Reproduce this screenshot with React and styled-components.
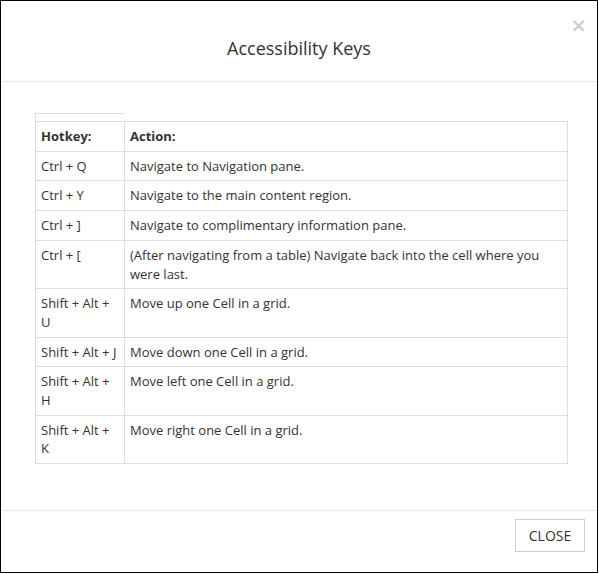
import React from "react";
import styled, { createGlobalStyle } from "styled-components";

const Global = createGlobalStyle`
  html, body { margin: 0; padding: 0; background: #fff; }
  body { font-family: "Open Sans", "Liberation Sans", sans-serif; color: #333; }
  * { box-sizing: border-box; }
`;

const Modal = styled.div`
  position: relative;
  width: 598px;
  height: 573px;
  border: 1px solid #000;
  display: flex;
  flex-direction: column;
  background: #fff;
`;

const Header = styled.div`
  padding: 34px 15px 20px;
  border-bottom: 1px solid #e5e5e5;
  text-align: center;
`;

const Title = styled.h4`
  margin: 0;
  font-size: 18px;
  line-height: 26px;
  font-weight: 400;
  color: #333;
`;

const CloseX = styled.button`
  position: absolute;
  top: 14px;
  right: 10px;
  border: 0;
  background: none;
  padding: 0;
  font-family: "DejaVu Sans", sans-serif;
  font-size: 20px;
  font-weight: 700;
  line-height: 20px;
  color: #cfcfcf;
  cursor: pointer;
`;

const Body = styled.div`
  flex: 1;
  padding: 31px 29px 0 34px;
`;

const Stub = styled.div`
  width: 89px;
  height: 8px;
  border-top: 1px solid #ddd;
  border-left: 1px solid #ddd;
`;

const Table = styled.table`
  width: 100%;
  border-collapse: collapse;
  table-layout: fixed;
  font-size: 13px;
  line-height: 18.7px;
`;

const Cell = styled.td`
  border: 1px solid #ddd;
  padding: 5px 5px;
  vertical-align: top;
  font-weight: ${(p) => (p.$head ? 700 : 400)};
  color: #333;
`;

const Footer = styled.div`
  border-top: 1px solid #e5e5e5;
  padding: 8px 12px 20px;
  display: flex;
  justify-content: flex-end;
`;

const Button = styled.button`
  width: 70px;
  height: 33px;
  border: 1px solid #ccc;
  background: #fff;
  font-family: "Open Sans", "Liberation Sans", sans-serif;
  font-size: 14px;
  color: #333;
  padding: 0;
  cursor: pointer;
`;

const rows = [
  ["Ctrl + Q", "Navigate to Navigation pane."],
  ["Ctrl + Y", "Navigate to the main content region."],
  ["Ctrl + ]", "Navigate to complimentary information pane."],
  ["Ctrl + [", "(After navigating from a table) Navigate back into the cell where you were last."],
  ["Shift + Alt + U", "Move up one Cell in a grid."],
  ["Shift + Alt + J", "Move down one Cell in a grid."],
  ["Shift + Alt + H", "Move left one Cell in a grid."],
  ["Shift + Alt + K", "Move right one Cell in a grid."],
];

export default function App() {
  return (
    <>
      <Global />
      <Modal>
        <Header>
          <Title>Accessibility Keys</Title>
          <CloseX aria-label="Close">×</CloseX>
        </Header>
        <Body>
          <Stub />
          <Table>
            <colgroup>
              <col style={{ width: 89 }} />
              <col />
            </colgroup>
            <tbody>
              <tr>
                <Cell $head>Hotkey:</Cell>
                <Cell $head>Action:</Cell>
              </tr>
              {rows.map(([k, a]) => (
                <tr key={k}>
                  <Cell>{k}</Cell>
                  <Cell>{a}</Cell>
                </tr>
              ))}
            </tbody>
          </Table>
        </Body>
        <Footer>
          <Button>CLOSE</Button>
        </Footer>
      </Modal>
    </>
  );
}
